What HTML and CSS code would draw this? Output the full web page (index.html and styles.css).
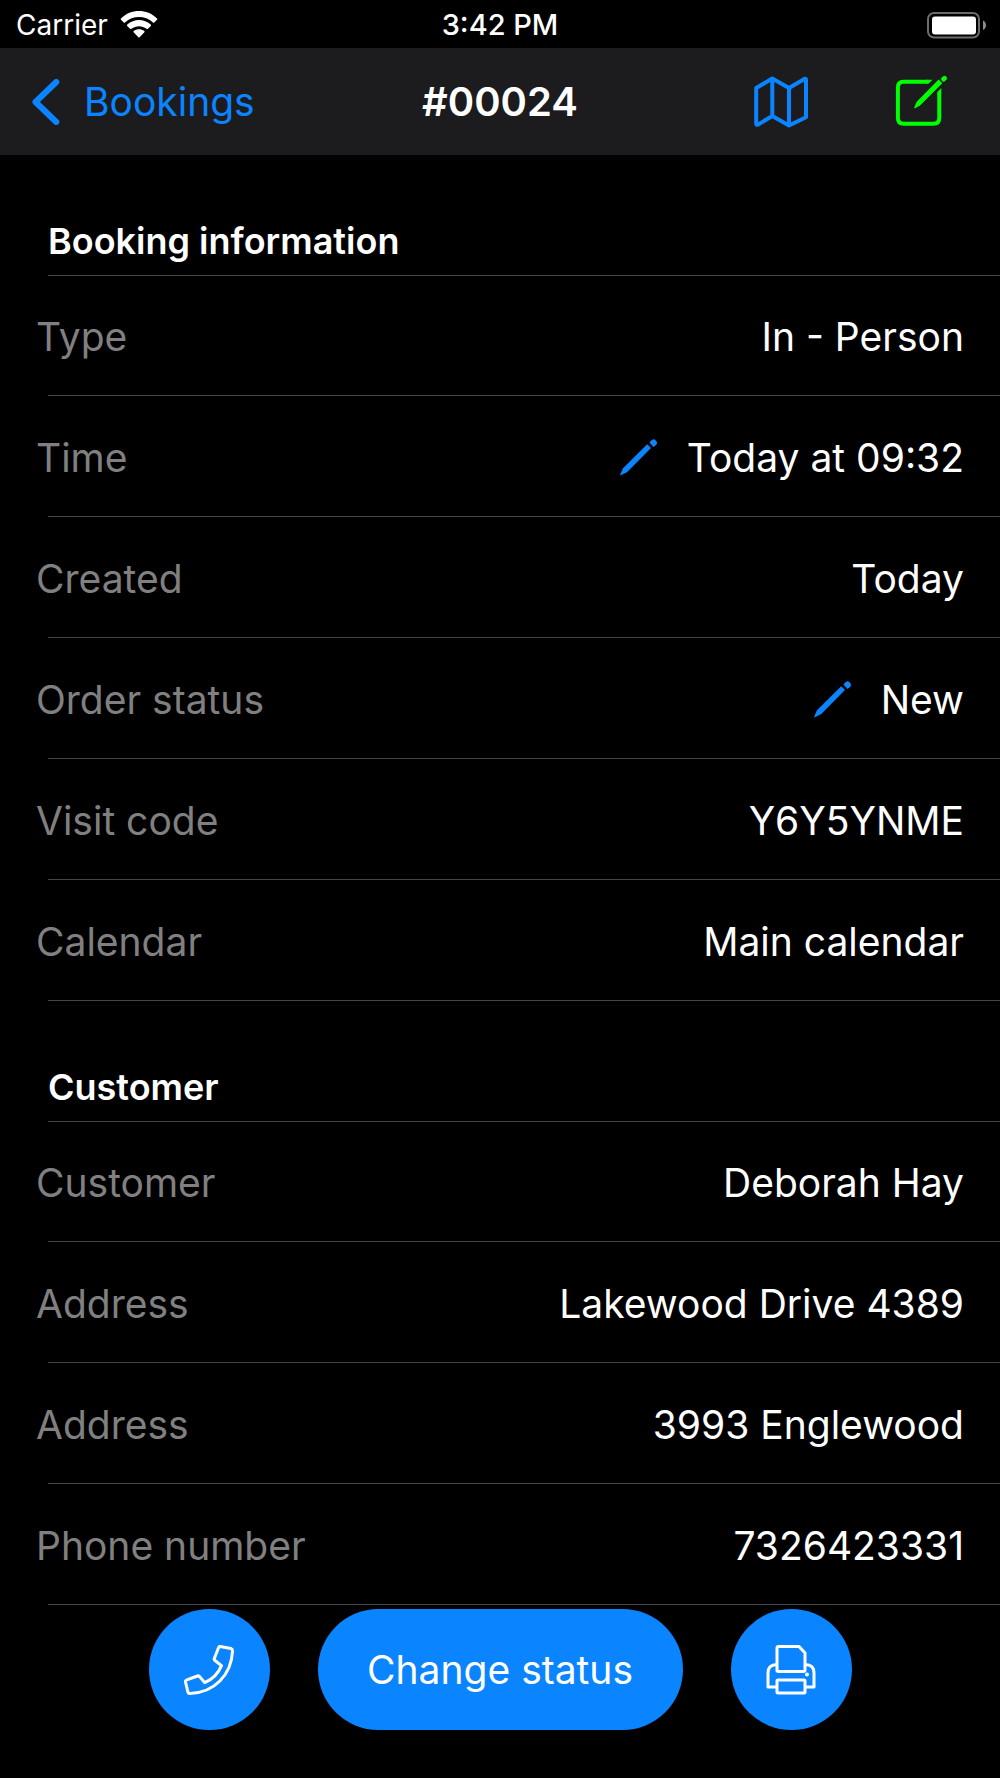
FILE: index.html
```html
<!DOCTYPE html>
<html lang="en">
<head>
  <meta charset="utf-8">
  <meta name="viewport" content="width=device-width, initial-scale=1">
  <title>Booking #00024</title>
  <link rel="stylesheet" href="styles.css">
</head>
<body>
  <svg class="sprite" aria-hidden="true">
    <symbol id="pencil" viewBox="0 0 40 40">
      <path d="M28.2 6.2 32 10 8 34.3 1.7 37.2Q.8 37.5 1.2 36.4L4 30.2Z"/>
      <path d="M30.400 4.600 32.600 2.200Q34.400.6 36.200 2L37.400 3.300Q38.800 5 37.300 6.700L34.600 8.900Z"/>
    </symbol>
  </svg>

  <div class="app">
    <div class="status">
      <div class="status-left">
        <span>Carrier</span>
        <svg class="wifi" viewBox="0 0 38 28" aria-hidden="true">
          <path d="M1 8.700Q.4 8 1 7.400C11-2.400 27-2.400 37 7.400Q37.600 8 37 8.700L34.300 11.400Q33.700 12 33 11.400C25 4.200 13 4.200 5 11.400Q4.300 12 3.700 11.400Z"/>
          <path d="M7.200 14.900Q6.600 14.300 7.300 13.600C14 7.600 24 7.600 30.700 13.600Q31.400 14.300 30.800 14.900L27.900 17.800Q27.300 18.300 26.600 17.800C22 14.300 16 14.300 11.400 17.800Q10.700 18.300 10.100 17.800Z"/>
          <path d="M13.600 21.200Q13 20.600 13.700 20C17 17.800 21 17.800 24.300 20Q25 20.600 24.400 21.200L19.600 26.300Q19 26.900 18.400 26.300Z"/>
        </svg>
      </div>
      <time class="status-time">3:42 PM</time>
      <div class="status-right">
        <svg class="battery" viewBox="0 0 60 28" aria-label="Battery full" role="img">
          <rect class="battery-case" x="2" y="2" width="51" height="24.500" rx="6"/>
          <rect class="battery-level" x="6" y="5.500" width="44" height="18" rx="3"/>
          <path class="battery-cap" d="M57 9.500Q60 11 60 14.200 60 17.500 57 19Z"/>
        </svg>
      </div>
    </div>

    <header class="nav">
      <a class="back" href="#">
        <svg class="chevron" viewBox="0 0 28 46" aria-hidden="true"><path d="M24.300 3 3.500 23 24.300 43"/></svg>
        <span>Bookings</span>
      </a>
      <h1 class="title">#00024</h1>
      <div class="nav-actions">
        <button class="icon-button map" type="button" aria-label="Map">
          <svg viewBox="0 0 54 54"><path d="M2.200 13 18.300 3.500 35 13 50.800 3.800Q52 3.500 52 5V42.200L35 50.500 18.300 41 4 49.600Q2.200 50.300 2.200 48.500V13ZM18.300 3.500V41M35 13V50.500"/></svg>
        </button>
        <button class="icon-button edit" type="button" aria-label="Edit booking">
          <svg viewBox="0 0 54 54">
            <path class="edit-box" d="M34 6.800H9.500Q3.900 6.800 3.900 12.500V43Q3.900 48.700 9.500 48.700H39.600Q45.300 48.700 45.300 43V18"/>
            <path d="M33 8.800V4.800H38.500L34.500 8.800ZM43.300 19V17L47.300 13V19Z"/>
            <path d="M44.600 4.600 48.300 8.300 26.300 30.200 21.200 33.300Q20 33.500 20.200 32.400L22.700 26.700Z"/>
            <path d="M47.400 2.700 49.600.9Q51 .2 52.300 1.400 53.500 2.900 52.800 4.300L50.600 6.600Q49.400 7.200 48 5.900 46.400 4.200 47.400 2.700Z"/>
          </svg>
        </button>
      </div>
    </header>

    <main>
      <section>
        <h2 class="heading">Booking information</h2>
        <dl class="rows">
          <div class="row"><dt>Type</dt><dd>In - Person</dd></div>
          <div class="row"><dt>Time</dt><dd><button class="pencil" type="button" aria-label="Edit time"><svg><use href="#pencil"/></svg></button>Today at 09:32</dd></div>
          <div class="row"><dt>Created</dt><dd>Today</dd></div>
          <div class="row"><dt>Order status</dt><dd><button class="pencil" type="button" aria-label="Edit order status"><svg><use href="#pencil"/></svg></button>New</dd></div>
          <div class="row"><dt>Visit code</dt><dd>Y6Y5YNME</dd></div>
          <div class="row"><dt>Calendar</dt><dd>Main calendar</dd></div>
        </dl>
      </section>
      <section>
        <h2 class="heading">Customer</h2>
        <dl class="rows">
          <div class="row"><dt>Customer</dt><dd>Deborah Hay</dd></div>
          <div class="row"><dt>Address</dt><dd>Lakewood Drive 4389</dd></div>
          <div class="row"><dt>Address</dt><dd>3993 Englewood</dd></div>
          <div class="row"><dt>Phone number</dt><dd>7326423331</dd></div>
        </dl>
      </section>
    </main>

    <footer class="actions">
      <button class="pill round" type="button" aria-label="Call customer">
        <svg viewBox="0 0 50 50"><path d="M36 1.600 47 3.500Q48.500 4 48.500 6C47.500 30 30 48 6 48.400Q4.300 48.500 3.900 47L1.500 37Q1.200 35.400 2.800 34.900L13.500 31Q14.600 30.600 15.500 31.500L20.700 37.600C28 34.500 34.500 28 37.500 20.600L31 15.500Q29.900 14.600 30.300 13.500L34.500 2.800Q35 1.500 36 1.600Z"/></svg>
      </button>
      <button class="pill wide" type="button">Change status</button>
      <button class="pill round" type="button" aria-label="Print">
        <svg viewBox="0 0 50 50">
          <path d="M11 26V3Q11 1.500 12.500 1.500H33L39 8V25Q39 26.500 37.500 26.500H12.500Q11 26.500 11 25ZM11 19.500Q2 19.500 2 28V42H11M39 19.500Q48 19.500 48 28V42H39"/>
          <rect x="11" y="35" width="28" height="13" rx="1"/>
          <circle class="dot" cx="41" cy="29.500" r="2"/>
        </svg>
      </button>
    </footer>
  </div>
</body>
</html>
```
FILE: styles.css
```css
:root {
  --blue: #0a84ff;
  --green: #00ff00;
  --bar: #1c1c1e;
  --line: #444446;
  --muted: #808080;
}

* {
  box-sizing: border-box;
}

body {
  margin: 0;
  background: #000;
  color: #fff;
  font: 400 39px/48px Inter, "Liberation Sans", sans-serif;
}

button {
  margin: 0;
  padding: 0;
  border: 0;
  background: none;
  color: inherit;
  font: inherit;
  cursor: pointer;
}

svg {
  display: block;
  fill: currentColor;
}

.sprite {
  display: none;
}

.app {
  display: flex;
  flex-direction: column;
  min-height: 100vh;
}

/* Status bar */
.status {
  display: grid;
  grid-template-columns: 1fr auto 1fr;
  align-items: center;
  height: 48px;
  padding: 2px 14px 0;
  font-size: 28px;
  line-height: 36px;
}

.status-left {
  display: flex;
  align-items: center;
  gap: 12px;
  padding-left: 2px;
}

.status-time {
  font-size: 29px;
  font-weight: 500;
}

.status-right {
  display: flex;
  justify-content: flex-end;
}

.wifi {
  width: 38px;
  height: 28px;
}

.battery {
  width: 60px;
  height: 28px;
}

.battery-case {
  fill: none;
  stroke: #6c6c6c;
  stroke-width: 2;
}

.battery-cap {
  fill: #8c8c8c;
}

/* Navigation bar */
.nav {
  display: grid;
  grid-template-columns: 1fr auto 1fr;
  align-items: center;
  height: 107px;
  padding: 0 32px;
  background: var(--bar);
}

.back {
  display: flex;
  align-items: center;
  gap: 24px;
  color: var(--blue);
  text-decoration: none;
}

.chevron {
  width: 28px;
  height: 46px;
  fill: none;
  stroke: currentColor;
  stroke-width: 6;
  stroke-linecap: round;
  stroke-linejoin: round;
}

.title {
  margin: 0;
  font-size: 40px;
  font-weight: 600;
}

.nav-actions {
  display: flex;
  justify-content: flex-end;
  gap: 86px;
  padding-right: 20px;
}

.icon-button svg {
  width: 54px;
  height: 54px;
}

.map {
  color: var(--blue);
}

.map svg,
.edit-box {
  fill: none;
  stroke: currentColor;
  stroke-width: 4;
  stroke-linejoin: round;
}

.edit {
  color: var(--green);
}

/* Details */
.heading {
  margin: 0;
  padding: 64px 48px 12px;
  background: linear-gradient(var(--line), var(--line)) 48px 100% / 100% 1px no-repeat;
  font-size: 36px;
  font-weight: 600;
  line-height: 45px;
}

.rows {
  margin: 0;
}

.row {
  display: flex;
  align-items: center;
  justify-content: space-between;
  min-height: 121px;
  padding: 2px 36px 0;
  background: linear-gradient(var(--line), var(--line)) 48px 100% / 100% 1px no-repeat;
}

.row:first-child {
  min-height: 120px;
}

.row dt {
  color: var(--muted);
}

.row dd {
  display: flex;
  align-items: center;
  margin: 0;
}

.pencil {
  margin-right: 28px;
  color: var(--blue);
}

.pencil svg {
  width: 40px;
  height: 40px;
}

/* Floating actions */
.actions {
  position: sticky;
  bottom: 0;
  display: flex;
  justify-content: center;
  gap: 48px;
  margin-top: auto;
  padding: 4px 32px 48px;
}

.pill {
  display: flex;
  align-items: center;
  justify-content: center;
  height: 121px;
  border-radius: 61px;
  background: var(--blue);
}

.round {
  width: 121px;
}

.wide {
  width: 365px;
}

.pill svg {
  width: 50px;
  height: 50px;
  fill: none;
  stroke: currentColor;
  stroke-width: 3;
  stroke-linejoin: round;
}

.pill .dot {
  fill: currentColor;
  stroke: none;
}
```
